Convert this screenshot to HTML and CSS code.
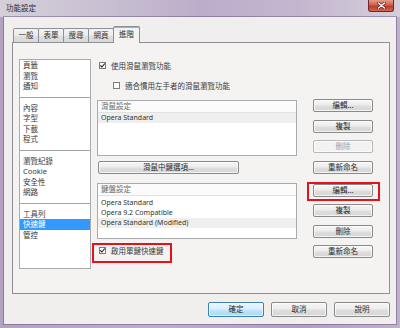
FILE: index.html
```html
<!DOCTYPE html>
<html lang="zh-Hant">
<head>
    <meta charset="UTF-8">
    <meta name="viewport" content="width=device-width, initial-scale=1.0">
    <title>功能設定</title>
    <link rel="stylesheet" href="styles.css">
</head>
<body>
    <div class="window">
        <div class="titlebar">
            <span class="title">功能設定</span>
            <span class="close">
                <svg width="9" height="7" viewBox="0 0 9 7">
                    <path d="M1.5 1 L7.5 6 M7.5 1 L1.5 6" stroke="#5a1d18" stroke-width="2.6" stroke-linecap="round"/>
                    <path d="M1.5 1 L7.5 6 M7.5 1 L1.5 6" stroke="#ffffff" stroke-width="1.4" stroke-linecap="round"/>
                </svg>
            </span>
        </div>

        <div class="client">
            <div class="tabs">
                <div class="tab">一般</div>
                <div class="tab">表單</div>
                <div class="tab">搜尋</div>
                <div class="tab">網頁</div>
                <div class="tab active">進階</div>
            </div>

            <div class="panel">
                <div class="nav">
                    <div class="nav-group">
                        <div class="nav-item">頁籤</div>
                        <div class="nav-item">瀏覽</div>
                        <div class="nav-item">通知</div>
                    </div>
                    <div class="nav-group">
                        <div class="nav-item">內容</div>
                        <div class="nav-item">字型</div>
                        <div class="nav-item">下載</div>
                        <div class="nav-item">程式</div>
                    </div>
                    <div class="nav-group">
                        <div class="nav-item">瀏覽紀錄</div>
                        <div class="nav-item">Cookie</div>
                        <div class="nav-item">安全性</div>
                        <div class="nav-item">網路</div>
                    </div>
                    <div class="nav-group last">
                        <div class="nav-item">工具列</div>
                        <div class="nav-item selected">快速鍵</div>
                        <div class="nav-item">管控</div>
                    </div>
                </div>

                <div class="main">
                    <div class="check first">
                        <span class="box"><svg width="7" height="7" viewBox="0 0 7 7"><path d="M1.3 3.4 L2.9 5 L5.8 1.5" fill="none" stroke="#1a1a1a" stroke-width="1.1"/></svg></span>
                        <span>使用滑鼠瀏覽功能</span>
                    </div>
                    <div class="check sub">
                        <span class="box"></span>
                        <span>適合慣用左手者的滑鼠瀏覽功能</span>
                    </div>

                    <div class="listbox mouse-list">
                        <div class="list-head">滑鼠設定</div>
                        <div class="list-row current">Opera Standard</div>
                    </div>

                    <button class="btn wide">滑鼠中鍵選項...</button>

                    <div class="listbox keys-list">
                        <div class="list-head">鍵盤設定</div>
                        <div class="list-row">Opera Standard</div>
                        <div class="list-row">Opera 9.2 Compatible</div>
                        <div class="list-row current">Opera Standard (Modified)</div>
                    </div>

                    <div class="marked-row">
                        <div class="check">
                            <span class="box"><svg width="7" height="7" viewBox="0 0 7 7"><path d="M1.3 3.4 L2.9 5 L5.8 1.5" fill="none" stroke="#1a1a1a" stroke-width="1.1"/></svg></span>
                            <span>啟用單鍵快速鍵</span>
                        </div>
                    </div>
                </div>

                <div class="side">
                    <div class="side-group">
                        <button class="btn">編輯...</button>
                        <button class="btn">複製</button>
                        <button class="btn" disabled>刪除</button>
                        <button class="btn">重新命名</button>
                    </div>
                    <div class="side-group second">
                        <button class="btn marked">編輯...</button>
                        <button class="btn">複製</button>
                        <button class="btn">刪除</button>
                        <button class="btn">重新命名</button>
                    </div>
                </div>
            </div>

            <div class="footer">
                <button class="btn footer-btn default">確定</button>
                <button class="btn footer-btn">取消</button>
                <button class="btn footer-btn">說明</button>
            </div>
        </div>
    </div>
</body>
</html>
```

FILE: styles.css
```css
body {
    margin: 0;
    font-family: "Noto Sans", "Noto Sans CJK TC", sans-serif;
    font-size: 7.5px;
    color: #333333;
    background: #ffffff;
}

.window {
    width: 400px;
    height: 328px;
    box-sizing: border-box;
    padding: 0 4px 4px 4px;
    display: flex;
    flex-direction: column;
    background: linear-gradient(90deg, #b3a3c1 0%, #bdaeca 40%, #b19fc1 75%, #bfb2cb 100%);
}

.titlebar {
    height: 17px;
    margin: 0 -4px;
    padding: 0 6px 0 6px;
    display: flex;
    align-items: flex-start;
    background: linear-gradient(90deg, #d4cfd9 0%, #c9c0d2 25%, #bcaecb 50%, #c4b6cf 75%, #d5cfda 100%);
}

.title {
    margin-top: 4px;
    font-size: 7.5px;
    line-height: 9px;
    color: #2a2630;
}

.close {
    margin-left: auto;
    width: 26px;
    height: 12px;
    box-sizing: border-box;
    border: 1px solid #6e2a24;
    border-top: none;
    border-radius: 0 0 3px 3px;
    background: linear-gradient(180deg, #e39a8a 0%, #d0604d 45%, #bb3b28 55%, #d2674c 100%);
    display: flex;
    align-items: center;
    justify-content: center;
}

.client {
    flex: 1;
    display: flex;
    flex-direction: column;
    background: #f0efed;
    box-shadow: 0 0 0 1px rgba(90, 70, 110, 0.45);
}

/* tab strip */
.tabs {
    display: flex;
    align-items: flex-end;
    height: 16px;
    margin: 9px 0 0 9px;
    position: relative;
    z-index: 1;
}

.tab {
    width: 26px;
    height: 14px;
    box-sizing: border-box;
    border: 1px solid #8e9097;
    border-bottom: none;
    margin-right: -1px;
    border-radius: 2px 2px 0 0;
    background: linear-gradient(180deg, #f3f3f3 0%, #ebebeb 50%, #dedede 52%, #d9d9d9 100%);
    text-align: center;
    line-height: 12px;
}

.tab.active {
    width: 27px;
    height: 17px;
    margin-bottom: -1px;
    background: #f4f3f1;
    border-color: #8e9097;
    box-shadow: inset 0 1px 0 #8ab4dd;
    line-height: 15px;
}

/* tab page */
.panel {
    height: 252px;
    margin: 0 6px 0 8px;
    box-sizing: border-box;
    border: 1px solid #8e9097;
    background: #f4f3f1;
    padding: 16px 16px 0 6px;
    display: flex;
    align-items: flex-start;
}

.nav {
    width: 72px;
    height: 210px;
    box-sizing: border-box;
    border: 1px solid #a9abaf;
    background: #ffffff;
}

.nav-group {
    padding: 4.5px 0 5.5px 0;
    border-bottom: 1px solid #a5a5a5;
}

.nav-group:first-child {
    padding-top: 0;
}

.nav-group.last {
    border-bottom: none;
}

.nav-item {
    height: 10.5px;
    line-height: 10.5px;
    padding-left: 3px;
    color: #3a3a3a;
}

.nav-item.selected {
    background: #3399ff;
    color: #ffffff;
}

.main {
    width: 200px;
    margin-left: 6px;
    display: flex;
    flex-direction: column;
}

.check {
    display: flex;
    align-items: center;
    height: 13px;
    padding-left: 2px;
    color: #3a3a3a;
}

.check.sub {
    margin-top: 7px;
    padding-left: 16px;
}

.box {
    width: 7px;
    height: 7px;
    box-sizing: border-box;
    border: 1px solid #7d7d7d;
    background: #ffffff;
    margin-right: 5px;
    display: flex;
    align-items: center;
    justify-content: center;
}

.box svg {
    flex: none;
}

.listbox {
    height: 56px;
    box-sizing: border-box;
    border: 1px solid #a9abaf;
    background: #ffffff;
}

.mouse-list {
    margin-top: 8px;
}

.keys-list {
    margin-top: 9px;
}

.list-head {
    height: 12px;
    line-height: 11px;
    padding-left: 3px;
    box-sizing: border-box;
    border-bottom: 1px solid #e2e2e2;
    color: #6a6a6a;
    background: #fbfbfb;
}

.keys-list .list-head {
    margin-bottom: 2px;
}

.list-row {
    height: 10px;
    line-height: 10px;
    padding-left: 3px;
    font-size: 7px;
    color: #34341f;
}

.list-row.current {
    background: #efefef;
}

.btn {
    font-family: inherit;
    font-size: 7.5px;
    color: #2a2a2a;
    height: 13px;
    padding: 0;
    box-sizing: border-box;
    border: 1px solid #8a8a8a;
    border-radius: 2px;
    background: linear-gradient(180deg, #f6f6f6 0%, #ececec 48%, #dedede 52%, #d6d6d6 100%);
    box-shadow: inset 0 0 0 1px rgba(255, 255, 255, 0.7);
    line-height: 11px;
}

.btn:disabled {
    color: #a3a3a3;
    border-color: #b8b8b8;
    background: #f2f2f2;
}

.btn.wide {
    width: 141px;
    margin: 5px 0 0 1px;
}

.marked-row {
    align-self: flex-start;
    margin: 4px 0 0 -5px;
    width: 80px;
    height: 20px;
    box-sizing: border-box;
    border: 2px solid #e8101a;
    padding: 0 0 0 3px;
}

.marked-row .check {
    height: 10px;
}

.side {
    width: 60px;
    margin-left: 16px;
    display: flex;
    flex-direction: column;
}

.side-group {
    display: flex;
    flex-direction: column;
    gap: 7.5px;
    margin-top: 40px;
}

.side-group.second {
    margin-top: 10px;
}

.marked {
    position: relative;
}

.marked::after {
    content: "";
    position: absolute;
    top: -3px;
    bottom: -5px;
    left: -7px;
    right: -8px;
    border: 2px solid #e8101a;
}

.footer {
    display: flex;
    justify-content: flex-end;
    gap: 7px;
    margin: 8px 6px 0 0;
}

.footer-btn {
    width: 56px;
    height: 15px;
    line-height: 13px;
}

.footer-btn.default {
    border-color: #3c7fb1;
    background: linear-gradient(180deg, #eaf6fd 0%, #d9f0fc 48%, #bee6fd 52%, #a7d9f5 100%);
    box-shadow: inset 0 0 0 1px rgba(255, 255, 255, 0.6);
}
```
